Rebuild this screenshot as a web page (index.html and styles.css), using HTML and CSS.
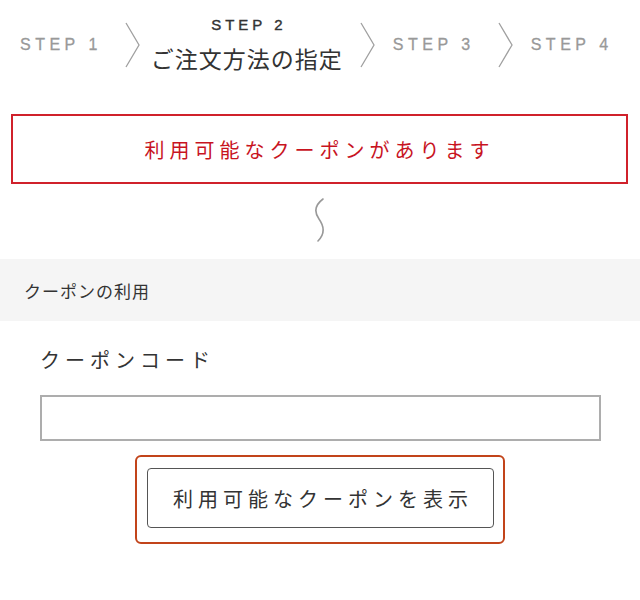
FILE: index.html
```html
<!DOCTYPE html>
<html lang="ja">
<head>
    <meta charset="UTF-8">
    <meta name="viewport" content="width=device-width, initial-scale=1.0">
    <title>ご注文方法の指定</title>
    <link rel="stylesheet" href="styles.css">
</head>
<body>
    <div class="steps">
        <div class="step">STEP 1</div>
        <svg class="chev" width="15" height="46" viewBox="0 0 15 46"><polyline points="1,1 14,23 1,45" fill="none" stroke="#a0a0a0" stroke-width="1.3"/></svg>
        <div class="step current">
            <span class="num">STEP 2</span>
            <span class="name">ご注文方法の指定</span>
        </div>
        <svg class="chev" width="15" height="46" viewBox="0 0 15 46"><polyline points="1,1 14,23 1,45" fill="none" stroke="#a0a0a0" stroke-width="1.3"/></svg>
        <div class="step">STEP 3</div>
        <svg class="chev" width="15" height="46" viewBox="0 0 15 46"><polyline points="1,1 14,23 1,45" fill="none" stroke="#a0a0a0" stroke-width="1.3"/></svg>
        <div class="step">STEP 4</div>
    </div>

    <div class="notice">利用可能なクーポンがあります</div>

    <div class="squiggle">
        <svg width="16" height="46" viewBox="0 0 16 46"><path d="M11 2 C3 8 2 15 7 22 C12 29 13 37 6 44" fill="none" stroke="#999" stroke-width="1.6" stroke-linecap="round"/></svg>
    </div>

    <div class="section-head">クーポンの利用</div>

    <form class="coupon-form">
        <label for="couponCode">クーポンコード</label>
        <input type="text" id="couponCode">
        <div class="btn-row">
            <div class="btn-frame">
                <button type="button">利用可能なクーポンを表示</button>
            </div>
        </div>
    </form>
</body>
</html>
```

FILE: styles.css
```css
body { margin: 0; font-family: "Liberation Sans", "Noto Sans CJK JP", sans-serif; color: #333; background: #fff; }

.steps { display: flex; align-items: center; height: 90px; padding-left: 20px; }
.step { font-size: 16px; letter-spacing: 4.5px; color: #999; white-space: nowrap; -webkit-text-stroke: 0.3px #999; }
.step.current { display: flex; flex-direction: column; align-items: center; margin: 0 -6px 0 -7px; color: #333; -webkit-text-stroke: 0; }
.step.current .num { font-size: 15px; letter-spacing: 4px; margin-right: -4px; -webkit-text-stroke: 0.4px #333; }
.step.current .name { font-family: "Noto Sans CJK JP", sans-serif; font-size: 23px; letter-spacing: 1px; margin-top: 8px; color: #333; }
.chev { flex: none; margin: 0 18px 0 23px; }

.notice { margin: 24px 12px 0 11px; height: 66px; border: 2px solid #d0212b; display: flex; align-items: center; justify-content: center; font-family: "Noto Sans CJK JP", sans-serif; font-size: 20px; letter-spacing: 5px; color: #c8141f; }

.squiggle { display: flex; justify-content: center; margin: 13px 0 16px; height: 46px; }

.section-head { background: #f5f5f5; height: 62px; display: flex; align-items: center; padding-left: 24px; font-family: "Noto Sans CJK JP", sans-serif; font-size: 17px; letter-spacing: 1px; color: #333; }

.coupon-form { padding: 24px 40px 0; }
.coupon-form label { display: block; font-family: "Noto Sans CJK JP", sans-serif; font-size: 20px; line-height: 30px; letter-spacing: 5px; color: #333; }
.coupon-form input { display: block; box-sizing: border-box; width: 561px; height: 46px; margin-top: 20px; border: 2px solid #adadad; border-radius: 0; padding: 0 10px; font-size: 16px; }
.btn-row { display: flex; justify-content: center; margin: 14px -40px 0; }
.btn-frame { border: 2px solid #c2441a; border-radius: 6px; padding: 11px 9px 14px 10px; }
.btn-frame button { display: block; width: 347px; height: 60px; background: #fff; border: 1.5px solid #555; border-radius: 4px; font-family: "Noto Sans CJK JP", sans-serif; font-size: 20px; letter-spacing: 5px; color: #333; padding: 0 0 0 5px; cursor: pointer; }
```
